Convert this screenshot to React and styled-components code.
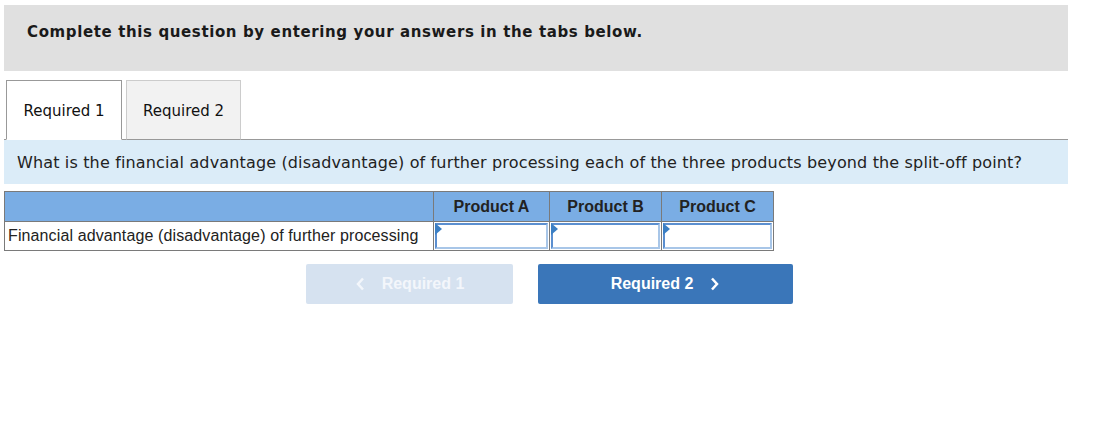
import React from "react";
import styled, { createGlobalStyle } from "styled-components";

const Global = createGlobalStyle`
  html, body { margin: 0; padding: 0; background: #fff; }
  body { font-family: "DejaVu Sans", Verdana, sans-serif; color: #000; }
`;

const Page = styled.div`
  width: 1064px;
  padding: 5px 0 0 4px;
`;

const Banner = styled.div`
  height: 66px;
  background: #e0e0e0;
  display: flex;
  align-items: flex-start;
  padding: 0 0 0 23px;
  box-sizing: border-box;
`;

const BannerText = styled.p`
  margin: 18px 0 0;
  font-family: "DejaVu Sans", Verdana, sans-serif;
  font-weight: bold;
  font-size: 15px;
  letter-spacing: 0.62px;
  color: #1a1a1a;
`;

const TabBar = styled.div`
  display: flex;
  gap: 4px;
  margin-top: 9px;
  padding-left: 2px;
  border-bottom: 1px solid #999;
`;

const Tab = styled.button`
  width: ${(p) => p.$w}px;
  height: 60px;
  margin-bottom: -1px;
  border: 1px solid ${(p) => (p.$active ? "#999" : "#ccc")};
  border-bottom: ${(p) => (p.$active ? "1px solid #fff" : "1px solid #999")};
  background: ${(p) => (p.$active ? "#fff" : "#f2f2f2")};
  font-family: "DejaVu Sans", Verdana, sans-serif;
  font-size: 15px;
  color: #111;
  padding: 1px 0 0;
  cursor: pointer;
`;

const Question = styled.div`
  background: #dbecf8;
  height: 44px;
  display: flex;
  align-items: center;
  padding: 1px 0 0 13px;
  box-sizing: border-box;
  font-size: 16px;
  letter-spacing: 0.15px;
  color: #222;
`;

const Table = styled.table`
  margin-top: 7px;
  border-collapse: collapse;
  font-family: "Liberation Sans", Arial, sans-serif;
`;

const Th = styled.th`
  background: #7aade4;
  border: 1px solid #7a7a7a;
  height: 29px;
  width: ${(p) => p.$w}px;
  padding: 0;
  font-size: 16px;
  font-weight: bold;
  color: #222;
  text-align: center;
`;

const LabelCell = styled.td`
  border: 1px solid #7a7a7a;
  height: 28px;
  padding: 0 12px 0 3px;
  font-size: 16px;
  letter-spacing: 0.12px;
  color: #222;
  white-space: nowrap;
`;

const InputCell = styled.td`
  border: 1px solid #7a7a7a;
  padding: 1px;
  height: 26px;
  position: relative;
`;

const AnswerBox = styled.input`
  display: block;
  width: 100%;
  height: 26px;
  box-sizing: border-box;
  border: 2px solid #4a86c8;
  border-color: #5b8fd0 #a8c6e8 #a8c6e8 #5b8fd0;
  background: #fff;
  outline: none;
  padding: 0 4px;
  font-family: "Liberation Sans", Arial, sans-serif;
  font-size: 14px;
`;

const Flag = styled.span`
  position: absolute;
  left: 1px;
  top: 1px;
  width: 0;
  height: 0;
  border-top: 6px solid transparent;
  border-bottom: 6px solid transparent;
  border-left: 7px solid #3b7fc4;
`;

const NavRow = styled.div`
  display: flex;
  gap: 25px;
  margin: 13px 0 0 302px;
`;

const NavButton = styled.button`
  width: ${(p) => p.$w}px;
  height: 40px;
  border: none;
  border-radius: 2px;
  background: ${(p) => (p.$disabled ? "#d6e2f0" : "#3a76b9")};
  color: ${(p) => (p.$disabled ? "#f3f6fb" : "#fff")};
  font-family: "Liberation Sans", Arial, sans-serif;
  font-weight: bold;
  font-size: 16px;
  display: flex;
  align-items: center;
  justify-content: center;
  gap: 16px;
  cursor: ${(p) => (p.$disabled ? "default" : "pointer")};
  padding: 0;
`;

const Chevron = ({ dir }) => (
  <svg width="11" height="16" viewBox="0 0 11 16">
    <path
      d={dir === "left" ? "M8 2.5 L3 8 L8 13.5" : "M3 2.5 L8 8 L3 13.5"}
      fill="none"
      stroke="currentColor"
      strokeWidth="2.5"
    />
  </svg>
);

export default function App() {
  const products = [
    { name: "Product A", w: 115 },
    { name: "Product B", w: 111 },
    { name: "Product C", w: 111 },
  ];
  return (
    <>
      <Global />
      <Page>
        <Banner>
          <BannerText>Complete this question by entering your answers in the tabs below.</BannerText>
        </Banner>
        <TabBar>
          <Tab $active $w={116}>Required 1</Tab>
          <Tab $w={115}>Required 2</Tab>
        </TabBar>
        <Question>
          What is the financial advantage (disadvantage) of further processing each of the three products beyond the split-off point?
        </Question>
        <Table>
          <thead>
            <tr>
              <Th $w={428} />
              {products.map((p) => (
                <Th key={p.name} $w={p.w}>{p.name}</Th>
              ))}
            </tr>
          </thead>
          <tbody>
            <tr>
              <LabelCell>Financial advantage (disadvantage) of further processing</LabelCell>
              {products.map((p) => (
                <InputCell key={p.name}>
                  <Flag />
                  <AnswerBox aria-label={p.name} />
                </InputCell>
              ))}
            </tr>
          </tbody>
        </Table>
        <NavRow>
          <NavButton $disabled $w={207}>
            <Chevron dir="left" />
            Required 1
          </NavButton>
          <NavButton $w={255}>
            Required 2
            <Chevron dir="right" />
          </NavButton>
        </NavRow>
      </Page>
    </>
  );
}
